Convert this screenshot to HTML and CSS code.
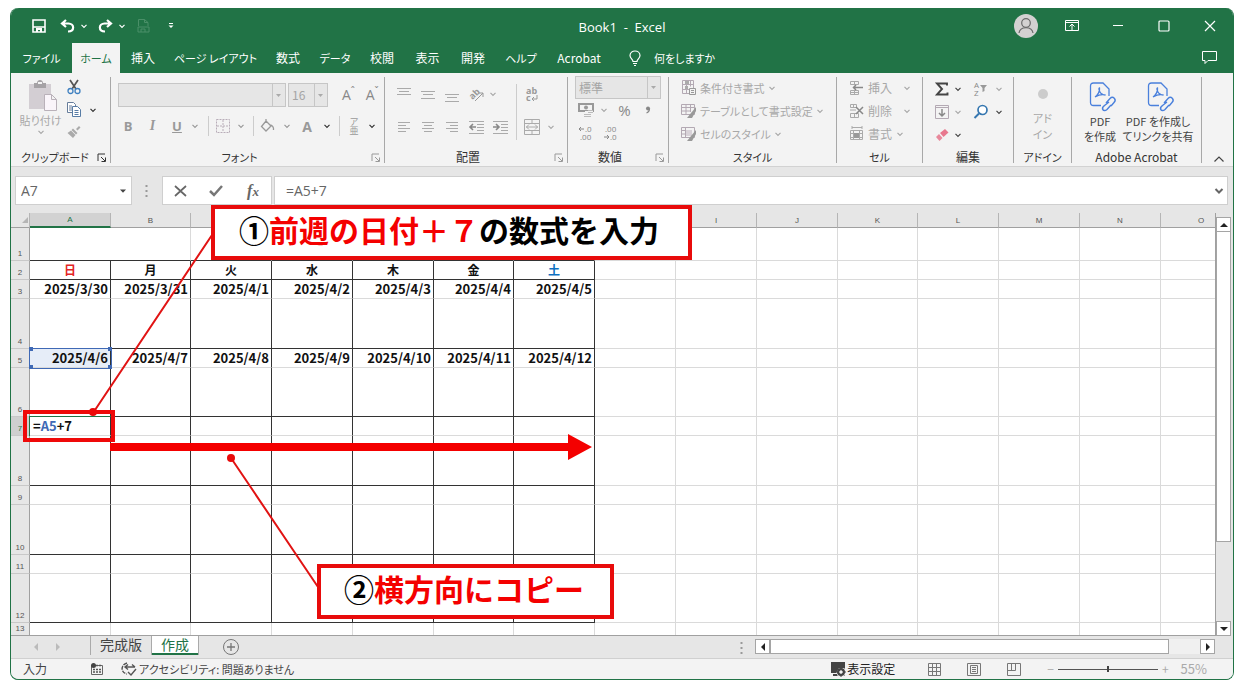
FILE: index.html
```html
<!DOCTYPE html>
<html lang="ja">
<head>
<meta charset="utf-8">
<meta name="viewport" content="width=device-width, initial-scale=1">
<title>Book1 - Excel</title>
<link rel="stylesheet" href="styles.css">
</head>
<body>
<svg class="defs" aria-hidden="true">
  <symbol id="chev" viewBox="0 0 8 8"><path d="M1.500 2.800 4 5.300 6.500 2.800" fill="none" stroke="currentColor" stroke-width="1.200"/></symbol>
  <symbol id="launch" viewBox="0 0 10 10"><path d="M1 8V1h7M4 4l4 4M8.500 4.500v4h-4" fill="none" stroke="currentColor"/></symbol>
  <symbol id="down" viewBox="0 0 8 8"><path d="M1 2.500h6L4 5.800z" fill="currentColor"/></symbol>
</svg>
<main class="stage">
<div class="window">
  <header class="titlebar">
    <div class="quick">
      <button aria-label="上書き保存"><svg width="14" height="14" viewBox="0 0 14 14"><path d="M1 1h12v12H1z M1 8h12" fill="none" stroke="#fff" stroke-width="1.600"/><path d="M4 9h6v4H8v-2H6v2H4z" fill="#fff"/></svg></button>
      <button class="undo" aria-label="元に戻す"><svg width="16" height="14" viewBox="0 0 16 14"><path d="M6 1 2 4.500 6 8M2.500 4.500h6c6 0 6.500 8-.5 8" fill="none" stroke="#fff" stroke-width="2.200"/></svg></button>
      <button aria-label="元に戻す一覧"><svg width="8" height="8"><use href="#chev"/></svg></button>
      <button aria-label="やり直し"><svg width="16" height="14" viewBox="0 0 16 14"><path d="M10 1l4 3.500L10 8M13.500 4.500h-6c-6 0-6.500 8 .5 8" fill="none" stroke="#fff" stroke-width="2.200"/></svg></button>
      <button aria-label="やり直し一覧"><svg width="8" height="8"><use href="#chev"/></svg></button>
      <button aria-label="PDF" disabled><svg width="13" height="15" viewBox="0 0 13 15"><path d="M1.500 8V1.500h6l3.500 3V8M7.500 1.500v3H11M1 9h11v5H1zM4 14v-3h4v3" fill="none" stroke="#4a8f68"/></svg></button>
      <button aria-label="クイック アクセスのカスタマイズ"><svg width="6" height="8" viewBox="0 0 6 8"><path d="M1 1.500h4" stroke="#fff"/><path d="M.5 3.500h5L3 6z" fill="#fff"/></svg></button>
    </div>
    <h1>Book1&nbsp; -&nbsp; Excel</h1>
    <div class="winctl">
      <button aria-label="アカウント"><svg width="24" height="24" viewBox="0 0 24 24"><circle cx="12" cy="12" r="12" fill="#d3d1d1"/><circle cx="12" cy="9" r="4.300" fill="none" stroke="#696969" stroke-width="1.200"/><path d="M5 19c1-7 13-7 14 0" fill="none" stroke="#696969" stroke-width="1.200"/></svg></button>
      <button aria-label="リボンの表示"><svg width="14" height="12" viewBox="0 0 14 12"><path d="M.5.5h13v10H.5zM.5 2.500h13M7 10V4M4.500 6.500 7 4l2.500 2.500" fill="none" stroke="#fff"/></svg></button>
      <button aria-label="最小化"><svg width="12" height="12"><path d="M1 5.500h10" stroke="#fff"/></svg></button>
      <button aria-label="最大化"><svg width="12" height="12"><rect x="1" y="1" width="10" height="10" rx="1" fill="none" stroke="#fff" stroke-width="1.200"/></svg></button>
      <button aria-label="閉じる"><svg width="12" height="12"><path d="M1 1l10 10M11 1 1 11" stroke="#fff" stroke-width="1.200"/></svg></button>
    </div>
  </header>
  <nav class="tabs">
    <button class="kana">ファイル</button><button class="on kana">ホーム</button><button>挿入</button><button class="kana">ページ レイアウト</button><button>数式</button><button class="kana">データ</button><button>校閲</button><button>表示</button><button>開発</button><button class="kana">ヘルプ</button><button>Acrobat</button>
    <button class="tell kana"><svg width="12" height="16" viewBox="0 0 12 16"><path d="M4 11.500C4 9 1 8.500 1 5.500c0-6 10-6 10 0 0 3-3 3.500-3 6zM4 13.500h4M5 15.500h2" fill="none" stroke="#fff" stroke-width="1.200"/></svg>何をしますか</button>
    <button class="comment" aria-label="コメント"><svg width="16" height="14" viewBox="0 0 16 14"><path d="M.5.5h14v9H6l-3 3v-3H.5z" fill="none" stroke="#fff"/></svg></button>
  </nav>

  <section class="ribbon">
    <div class="group clip">
      <div class="body">
        <button class="paste off"><svg class="board" width="30" height="32" viewBox="0 0 30 32"><path d="M1 4h22v25H1z" fill="#d3ced3"/><path d="M6 3h3c0-4 6-4 6 0h3v5H6z" fill="#a5a2a5"/><path d="M10 2h4v2h-4z" fill="#f3f3f3"/><path d="M16.500 14.500h7l5 5v11h-12zM23.500 14.500v5h5" fill="#faf5fa" stroke="#b9b1b9"/></svg><span>貼り付け</span><svg width="8" height="8"><use href="#chev"/></svg></button>
        <div class="stack">
          <button aria-label="切り取り"><svg width="14" height="16" viewBox="0 0 14 16"><path d="M3 1l6 9M11 1 5 10" stroke="#555" stroke-width="1.700"/><circle cx="3.500" cy="12" r="2.500" fill="none" stroke="#3f80c0" stroke-width="1.300"/><circle cx="10.500" cy="12" r="2.500" fill="none" stroke="#3f80c0" stroke-width="1.300"/></svg></button>
          <button aria-label="コピー"><svg width="14" height="16" viewBox="0 0 14 16"><path d="M.5.5h6l2 2v8h-8zM2 4h3M2 6h3M2 8h3" fill="#fff" stroke="#667d9b"/><path d="M5.500 4.500h5l3 3v7h-8zM7.500 8.500h4M7.500 10.500h4M7.500 12.500h4" fill="#fff" stroke="#587ca5"/></svg></button>
          <button aria-label="書式のコピー"><svg width="14" height="14" viewBox="0 0 14 14"><path d="M9 4l3-3 1.500 1.500-3 3zM6 3.500 10.500 8 9 9.500 4.500 5zM4 5.500 8.500 10 6 13 .5 8z" fill="#aaa"/></svg></button>
        </div>
        <button class="copychev" aria-label="コピー一覧"><svg width="8" height="8"><use href="#chev"/></svg></button>
      </div>
      <footer>クリップボード<svg width="10" height="10"><use href="#launch"/></svg></footer>
    </div>

    <div class="group font off launcher">
      <div class="body">
        <div class="row first">
          <select class="family" aria-label="フォント" disabled><option></option></select>
          <select class="size" aria-label="フォント サイズ" disabled><option>16</option></select>
          <button class="grow" aria-label="フォント サイズの拡大">A<sup>ˆ</sup></button>
          <button class="grow" aria-label="フォント サイズの縮小">A<sup>ˇ</sup></button>
        </div>
        <div class="row second">
          <button><b>B</b></button><button><i>I</i></button><button><u>U</u></button><button aria-label="下線"><svg width="8" height="8"><use href="#chev"/></svg></button><span class="sep"></span>
          <button aria-label="罫線"><svg width="14" height="14" viewBox="0 0 14 14"><path d="M.5.5h13v13H.5zM7 1v12M1 7h12" fill="none" stroke="#b8adb8" stroke-dasharray="2 1"/></svg></button><button aria-label="罫線一覧"><svg width="8" height="8"><use href="#chev"/></svg></button><span class="sep"></span>
          <button aria-label="塗りつぶし"><svg width="14" height="14" viewBox="0 0 14 14"><path d="M5 2l5 5-5 5-4.500-4.500zM5 2V0M9 6c2 0 4 2 3.500 5" fill="none" stroke="#999" stroke-width="1.300"/></svg></button><button aria-label="塗りつぶし一覧"><svg width="8" height="8"><use href="#chev"/></svg></button>
          <button class="fontcolor">A</button><button class="live" aria-label="フォントの色"><svg width="8" height="8"><use href="#chev"/></svg></button><span class="sep"></span>
          <button class="ruby"><span>ア</span><span>亜</span></button><button class="live" aria-label="ふりがな"><svg width="8" height="8"><use href="#chev"/></svg></button>
        </div>
      </div>
      <footer class="kana">フォント<svg width="10" height="10"><use href="#launch"/></svg></footer>
    </div>

    <div class="group align off launcher">
      <div class="body">
        <div class="aligns">
          <button aria-label="上揃え"><svg width="16" height="16"><path d="M1 2.500h14M3 5.500h10M1 8.500h14" stroke="#aaa"/></svg></button>
          <button aria-label="上下中央揃え"><svg width="16" height="16"><path d="M1 5.500h14M3 8.500h10M1 12.500h14" stroke="#aaa"/></svg></button>
          <button aria-label="下揃え"><svg width="16" height="16"><path d="M1 8.500h14M3 11.500h10M1 15.500h14" stroke="#aaa"/></svg></button>
          <button aria-label="方向"><svg width="18" height="18" viewBox="0 0 18 18"><text x="0" y="12" transform="rotate(-45 6 8)" class="tiny">ab</text><path d="M7 16l8-8M15 12V8h-4" fill="none" stroke="#999"/></svg></button>
          <button class="near" aria-label="方向一覧"><svg width="8" height="8"><use href="#chev"/></svg></button>
          <button aria-label="左揃え"><svg width="16" height="16"><path d="M2 3.500h12M2 6.500h8M2 9.500h12M2 12.500h8" stroke="#aaa"/></svg></button>
          <button aria-label="中央揃え"><svg width="16" height="16"><path d="M2 3.500h12M4 6.500h8M2 9.500h12M4 12.500h8" stroke="#aaa"/></svg></button>
          <button aria-label="右揃え"><svg width="16" height="16"><path d="M2 3.500h12M6 6.500h8M2 9.500h12M6 12.500h8" stroke="#aaa"/></svg></button>
          <button aria-label="インデント減"><svg width="16" height="16"><path d="M0 2.500h15M8 5.500h7M8 8.500h7M8 11.500h7M0 14.500h15" stroke="#aaa"/><path d="M7 8H1M4 5 1 8l3 3" fill="none" stroke="#888" stroke-width="1.600"/></svg></button>
          <button aria-label="インデント増"><svg width="16" height="16"><path d="M0 2.500h15M8 5.500h7M8 8.500h7M8 11.500h7M0 14.500h15" stroke="#aaa"/><path d="M0 8h6M3 5l3 3-3 3" fill="none" stroke="#888" stroke-width="1.600"/></svg></button>
        </div>
        <span class="sep"></span>
        <div class="merge">
          <button aria-label="折り返し"><svg width="16" height="18" viewBox="0 0 16 18"><text x="2" y="8" class="tiny">ab</text><text x="2" y="15" class="tiny">c</text><path d="M13 9v4H8M10 11l-2 2 2 2" fill="none" stroke="#999"/></svg></button><span></span>
          <button aria-label="セルを結合"><svg width="16" height="16" viewBox="0 0 16 16"><path d="M.5.5h15v15H.5zM.5 4.500h15M.5 11.500h15M8 .5v4M8 11.500v4M2 8h12M5 5.500 2.500 8 5 10.500M11 5.500 13.500 8 11 10.500" fill="none" stroke="#aaa"/></svg></button>
          <button aria-label="結合一覧"><svg width="8" height="8"><use href="#chev"/></svg></button>
        </div>
      </div>
      <footer>配置<svg width="10" height="10"><use href="#launch"/></svg></footer>
    </div>

    <div class="group number off launcher">
      <div class="body">
        <select aria-label="表示形式" disabled><option>標準</option></select>
        <div class="row">
          <button aria-label="通貨"><svg width="16" height="16" viewBox="0 0 16 16"><path d="M1 2h14v7H1z" fill="none" stroke="#999" stroke-width="2"/><circle cx="8" cy="5.500" r="2" fill="#999"/><path d="M7 9h8v6H7z" fill="#f3f3f3"/><path d="M10 8.500h5M10 10.500h5M6 12.500h7M6 14.500h7" stroke="#bbb"/></svg></button>
          <button aria-label="通貨一覧"><svg width="8" height="8"><use href="#chev"/></svg></button>
          <button class="pct">%</button><button class="comma" aria-label="桁区切り"><svg width="6" height="8" viewBox="0 0 6 8"><circle cx="3" cy="2.500" r="2" fill="#888"/><path d="M4.500 2.500Q4.500 6 1.500 7" fill="none" stroke="#888" stroke-width="1.200"/></svg></button>
        </div>
        <div class="row decimals">
          <button aria-label="小数点以下を増やす"><svg width="15" height="16" viewBox="0 0 15 16"><path d="M6 4H1M3 2 1 4l2 2" fill="none" stroke="#888"/><text x="7" y="7" class="micro">.0</text><text x="2" y="15" class="micro">.00</text></svg></button>
          <button aria-label="小数点以下を減らす"><svg width="15" height="16" viewBox="0 0 15 16"><text x="2" y="7" class="micro">.00</text><path d="M1 12h5M4 10l2 2-2 2" fill="none" stroke="#888"/><text x="7" y="15" class="micro">.0</text></svg></button>
        </div>
      </div>
      <footer>数値<svg width="10" height="10"><use href="#launch"/></svg></footer>
    </div>

    <div class="group styles off">
      <div class="body list">
        <button><svg width="16" height="16" viewBox="0 0 16 16"><path d="M1.500.5h11v13h-11zM1.500 4.500h11M1.500 9.500h11M5.500.5v13M9.500.5v6" fill="none" stroke="#b3a9b3"/><path d="M4 1h4v3H4zM4 6h3v3H4z" fill="#aaa"/><path d="M8.500 8.500h6v6h-6zM10 10.500h3M10 12.500h3" fill="#f3f3f3" stroke="#999"/></svg>条件付き書式<svg width="8" height="8"><use href="#chev"/></svg></button>
        <button><svg width="16" height="16" viewBox="0 0 16 16"><path d="M.5 1.500h13v10H.5zM.5 4.500h13M.5 8H10M5 1.500v10M9.500 1.500V9" fill="none" stroke="#b3a9b3"/><path d="M15 4 10 10l-4 5h5l4-7z" fill="#999"/></svg>テーブルとして書式設定<svg width="8" height="8"><use href="#chev"/></svg></button>
        <button><svg width="16" height="16" viewBox="0 0 16 16"><path d="M.5 1.500h13v10H.5zM.5 4.500h4M.5 8h4M4.500 1.500v10" fill="none" stroke="#b3a9b3"/><path d="M5 4h6v6H5z" fill="#d8d2d8"/><path d="M15 4 10 10l-4 5h5l4-7z" fill="#999"/></svg>セルのスタイル<svg width="8" height="8"><use href="#chev"/></svg></button>
      </div>
      <footer class="kana">スタイル</footer>
    </div>

    <div class="group cells off">
      <div class="body list">
        <button><svg width="16" height="16" viewBox="0 0 16 16"><path d="M1.500 1.500h8v3h-8zM1.500 10.500h8v4h-8zM5.500 1.500v3M5.500 10.500v4M1 12.500h8" fill="none" stroke="#aaa"/><path d="M14 7.500H5M7 5 4.500 7.500 7 10" fill="none" stroke="#888" stroke-width="1.500"/></svg><span>挿入</span><svg width="8" height="8"><use href="#chev"/></svg></button>
        <button><svg width="16" height="16" viewBox="0 0 16 16"><path d="M1.500 1.500h6v3h-6zM1.500 10.500h8v4h-8zM4.500 1.500v3M5.500 10.500v4M1 7h6" fill="none" stroke="#aaa"/><path d="M7 4l7 7M14 4l-7 7" stroke="#888" stroke-width="1.500"/></svg><span>削除</span><svg width="8" height="8"><use href="#chev"/></svg></button>
        <button class="tight"><svg width="16" height="16" viewBox="0 0 16 16"><path d="M1.500 4.500h12v9h-12zM4.500 4v10M10.500 4v10M1 7.500h13M1 11.500h13M3 1.500h10M3 0v3M13 0v3" fill="none" stroke="#aaa"/><path d="M5 7h5v5H5z" fill="#999"/></svg><span>書式</span><svg width="8" height="8"><use href="#chev"/></svg></button>
      </div>
      <footer class="kana">セル</footer>
    </div>

    <div class="group edit">
      <div class="body">
        <button aria-label="オート SUM"><svg width="14" height="14" viewBox="0 0 14 14"><path d="M12 3.500V1.500H2L7 7l-5 5.500h10.500v-2" fill="none" stroke="#444" stroke-width="1.900"/></svg></button><button aria-label="SUM一覧"><svg width="8" height="8"><use href="#chev"/></svg></button>
        <button class="off" aria-label="並べ替え"><svg width="16" height="16" viewBox="0 0 16 16"><text x="1" y="7" class="micro">A</text><text x="1" y="15" class="micro">Z</text><path d="M7 4h7l-2.500 3v3l-2 1V7z" fill="#999"/></svg></button><button class="off" aria-label="並べ替え一覧"><svg width="8" height="8"><use href="#chev"/></svg></button>
        <button class="off" aria-label="フィル"><svg width="14" height="14" viewBox="0 0 14 14"><path d="M.5.5h13v13H.5zM.5 2.500h13" fill="none" stroke="#b3a9b3"/><path d="M7 4v7M4 8l3 3 3-3" fill="none" stroke="#888" stroke-width="1.500"/></svg></button><button class="off" aria-label="フィル一覧"><svg width="8" height="8"><use href="#chev"/></svg></button>
        <button aria-label="検索"><svg width="16" height="16" viewBox="0 0 16 16"><circle cx="9.500" cy="6" r="4.500" fill="#fff" stroke="#3677b0" stroke-width="1.700"/><path d="M6 9.500 1.500 14" stroke="#3677b0" stroke-width="2"/></svg></button><button aria-label="検索一覧"><svg width="8" height="8"><use href="#chev"/></svg></button>
        <button aria-label="クリア"><svg width="14" height="14" viewBox="0 0 14 14"><path d="M5 5l5-4 3.500 3.500-5 4.500z" fill="#e8788e"/><path d="M4 6l3.500 4L4.500 13 1 9z" fill="#e8889b"/></svg></button><button aria-label="クリア一覧"><svg width="8" height="8"><use href="#chev"/></svg></button>
      </div>
      <footer>編集</footer>
    </div>

    <div class="group addin off">
      <div class="body"><button class="kana"><svg width="12" height="12"><circle cx="6" cy="6" r="5" fill="#ccc"/></svg><span>アド<br>イン</span></button></div>
      <footer class="kana">アドイン</footer>
    </div>

    <div class="group acrobat">
      <div class="body">
        <button><svg width="28" height="30" viewBox="0 0 28 30"><path d="M12 23.500H4.500q-3 0-3-3V4q0-3 3-3H14l6 6v7M6 15c3-2 5-6 4.500-9-1.500 0 0 7 6 7-4-1-7 0-10.500 2z" fill="none" stroke="#4a80dc" stroke-width="1.300"/><path d="M17 21l4-4.500c3-3 7 1 4 4L22 24M20 20l-4.500 3.500c-4 3-1 7 2.500 4l4-4.500" fill="none" stroke="#4a80dc" stroke-width="1.400"/></svg><span>PDF<br>を作成</span></button>
        <button><svg width="28" height="30" viewBox="0 0 28 30"><path d="M12 23.500H4.500q-3 0-3-3V4q0-3 3-3H14l6 6v7M6 15c3-2 5-6 4.500-9-1.500 0 0 7 6 7-4-1-7 0-10.500 2z" fill="none" stroke="#4a80dc" stroke-width="1.300"/><path d="M17 21l4-4.500c3-3 7 1 4 4L22 24M20 20l-4.500 3.500c-4 3-1 7 2.500 4l4-4.500" fill="none" stroke="#4a80dc" stroke-width="1.400"/></svg><span>PDF を作成し<br>てリンクを共有</span></button>
      </div>
      <footer>Adobe Acrobat</footer>
    </div>
    <button class="collapse" aria-label="リボンを折りたたむ"><svg width="12" height="8"><path d="M1.500 6.500 6 2l4.500 4.500" fill="none" stroke="#444" stroke-width="1.200"/></svg></button>
  </section>

  <section class="formula">
    <div class="namebox"><input aria-label="名前ボックス" value="A7"><svg width="8" height="8"><use href="#down"/></svg></div>
    <svg class="grip" width="3" height="13"><path d="M1.500 1v12" stroke="#999" stroke-width="2" stroke-dasharray="2 3"/></svg>
    <div class="fx">
      <button aria-label="キャンセル"><svg width="13" height="12"><path d="M1 1l11 10M12 1 1 11" stroke="#666" stroke-width="1.700"/></svg></button>
      <button aria-label="入力"><svg width="14" height="12"><path d="M1 6l4 4 8-9" fill="none" stroke="#777" stroke-width="2.500"/></svg></button>
      <button class="fn" aria-label="関数の挿入"><i>f<small>x</small></i></button>
    </div>
    <div class="entry"><input aria-label="数式バー" value="=A5+7"><svg width="10" height="8" viewBox="0 0 10 8"><path d="M1.500 2 5 5.500 8.500 2" fill="none" stroke="#666" stroke-width="2"/></svg></div>
  </section>

  <section class="sheet">
    <div class="gridwrap">
    <table class="grid">
      <colgroup><col class="rh"><col><col class="s"><col><col><col><col class="s"><col><col><col><col><col class="s"><col><col><col><col class="last"></colgroup>
      <thead><tr><th class="corner"><svg width="8" height="8"><path d="M7 1v6H1z" fill="#b5b5b5"/></svg></th><th class="sel">A</th><th>B</th><th>C</th><th>D</th><th>E</th><th>F</th><th>G</th><th>H</th><th>I</th><th>J</th><th>K</th><th>L</th><th>M</th><th>N</th><th class="o">O</th></tr></thead>
      <tbody>
        <tr class="title"><th>1</th><td colspan="2"><td><td><td><td><td><td><td><td><td><td><td><td><td></tr>
        <tr class="cal dow line"><th>2</th><td class="sun">日</td><td>月</td><td>火</td><td>水</td><td>木</td><td>金</td><td class="sat">土</td><td><td><td><td><td><td><td><td></tr>
        <tr class="cal date"><th>3</th><td>2025/3/30</td><td>2025/3/31</td><td>2025/4/1</td><td>2025/4/2</td><td>2025/4/3</td><td>2025/4/4</td><td>2025/4/5</td><td><td><td><td><td><td><td><td></tr>
        <tr class="cal memo line"><th>4</th><td><td><td><td><td><td><td><td><td><td><td><td><td><td><td></tr>
        <tr class="cal date"><th>5</th><td class="ref">2025/4/6<i></i><i></i><i></i><i></i></td><td>2025/4/7</td><td>2025/4/8</td><td>2025/4/9</td><td>2025/4/10</td><td>2025/4/11</td><td>2025/4/12</td><td><td><td><td><td><td><td><td></tr>
        <tr class="cal memo short line"><th>6</th><td><td><td><td><td><td><td><td><td><td><td><td><td><td><td></tr>
        <tr class="cal date"><th class="rsel">7</th><td class="active">=<em>A5</em>+7</td><td><td><td><td><td><td><td><td><td><td><td><td><td><td></tr>
        <tr class="cal memo line"><th>8</th><td><td><td><td><td><td><td><td><td><td><td><td><td><td><td></tr>
        <tr class="cal date"><th>9</th><td><td><td><td><td><td><td><td><td><td><td><td><td><td><td></tr>
        <tr class="cal memo line"><th>10</th><td><td><td><td><td><td><td><td><td><td><td><td><td><td><td></tr>
        <tr class="cal date"><th>11</th><td><td><td><td><td><td><td><td><td><td><td><td><td><td><td></tr>
        <tr class="cal memo short line"><th>12</th><td><td><td><td><td><td><td><td><td><td><td><td><td><td><td></tr>
        <tr class="end"><th>13</th><td><td><td><td><td><td><td><td><td><td><td><td><td><td><td></tr>
      </tbody>
    </table>
    </div>
    <div class="vscroll"><button aria-label="上へ"><svg width="10" height="8"><path d="M1 6h8L5 2z" fill="#222"/></svg></button><span class="thumb"></span><button aria-label="下へ"><svg width="10" height="8"><path d="M1 2h8L5 6z" fill="#222"/></svg></button></div>
  </section>

  <nav class="sheets">
    <button class="arrow" aria-label="前のシート"><svg width="8" height="8"><path d="M6 0v8L2 4z" fill="#bbb"/></svg></button>
    <button class="arrow" aria-label="次のシート"><svg width="8" height="8"><path d="M2 0v8l4-4z" fill="#bbb"/></svg></button>
    <button class="tab first">完成版</button><button class="tab cur">作成</button>
    <button class="add" aria-label="新しいシート"><svg width="16" height="16"><circle cx="8" cy="8" r="7.500" fill="none" stroke="#777"/><path d="M4 8h8M8 4v8" stroke="#777" stroke-width="1.300"/></svg></button>
    <svg class="dots" width="3" height="12"><path d="M1.500 0v12" stroke="#999" stroke-width="2" stroke-dasharray="2 3"/></svg>
    <div class="hscroll"><button aria-label="左へ"><svg width="8" height="10"><path d="M6 1v8L2 5z" fill="#222"/></svg></button><span class="thumb"></span><button aria-label="右へ"><svg width="8" height="10"><path d="M2 1v8l4-4z" fill="#222"/></svg></button></div>
  </nav>
  <footer class="status">
    <span class="mode">入力</span>
    <svg width="12" height="12" viewBox="0 0 12 12"><path d="M.5 2.500h11v9H.5z" fill="none" stroke="#666"/><circle cx="2.500" cy="2.500" r="2.500" fill="#444"/><path d="M5 2.500h6M2 6.500h8M2 9h8" stroke="#555" stroke-width="1.500" stroke-dasharray="2 1"/></svg>
    <button class="acc kana"><svg width="16" height="14" viewBox="0 0 16 14"><path d="M6 1C-1 3 0 11 6 12" fill="none" stroke="#555" stroke-width="1.400" stroke-dasharray="4 1"/><path d="M4 5h10M7 2.500 4 5l3 2.500M11 2.500 14 5M7 10l3 3 5-6" fill="none" stroke="#555" stroke-width="1.400"/></svg>アクセシビリティ: 問題ありません</button>
    <button class="disp"><svg width="17" height="15" viewBox="0 0 17 15"><path d="M1 0h14v6H9l-3 5H1z" fill="#444"/><path d="M3 12h4v2H3z" fill="#444"/><circle cx="11" cy="10" r="3" fill="none" stroke="#444" stroke-width="2"/><path d="M11 5v10M6 10h10M7.500 6.500l7 7M14.500 6.500l-7 7" stroke="#444"/><circle cx="11" cy="10" r="1.500" fill="#f3f3f3"/></svg>表示設定</button>
    <button aria-label="標準"><svg width="13" height="13"><path d="M.5.5h12v12H.5zM4.500 0v13M8.500 0v13M0 4.500h13M0 8.500h13" fill="none" stroke="#777"/></svg></button>
    <button aria-label="ページ レイアウト"><svg width="14" height="13"><path d="M.5.5h13v12H.5zM3.500 2.500h7v8h-7zM5 4.500h4M5 6.500h4M5 8.500h4" fill="none" stroke="#777"/></svg></button>
    <button aria-label="改ページ"><svg width="14" height="13"><path d="M.5.5h13v12H.5zM.5 7.500h8M4.500 0v7.500M8.500 0v7.500" fill="none" stroke="#777"/></svg></button>
    <label class="zoom"><span>−</span><input type="range" min="0" max="100" value="50" aria-label="ズーム"><span>+</span></label>
    <span class="percent">55%</span>
  </footer>
</div>

<svg class="marks" aria-hidden="true">
  <path d="M93 413 212 235M231 458 318 587" stroke="#e11313" stroke-width="2"/>
  <circle cx="93" cy="412" r="4" fill="#e80b0b"/><circle cx="231" cy="458" r="4" fill="#e80b0b"/>
  <path d="M110 443h458v-9l24 13-24 13v-9H110z" fill="#f40000"/>
  <rect x="25" y="412" width="88" height="28" fill="none" stroke="#ef0909" stroke-width="4"/>
</svg>
<p class="callout one">①<em>前週の日付＋７</em>の数式を入力</p>
<p class="callout two">②<em>横方向にコピー</em></p>
</main>
</body>
</html>
```
FILE: styles.css
```css
* { box-sizing: border-box; }
body {
  margin: 0;
  background: #fff;
  color: #444;
  font-family: "Noto Sans CJK JP", "Noto Sans", sans-serif;
  font-size: 12px;
  line-height: 16px;
}
button, input, select { font: inherit; color: inherit; }
button {
  display: flex; align-items: center; justify-content: center;
  margin: 0; padding: 0; border: 0; background: none;
  white-space: nowrap;
  font-feature-settings: "palt";
}
svg { display: block; flex: none; overflow: visible; }
.kana { font-size: 11px; }
.defs { position: absolute; width: 0; height: 0; }
.stage { position: relative; padding: 8px 6px 8px 11px; }
.window {
  display: flex; flex-direction: column;
  border: solid #217346; border-width: 0 1px 1px 0;
  border-radius: 8px;
  overflow: hidden;
  background: #e6e6e6;
  box-shadow: -1px 0 0 #217346;
}

/* title bar */
.titlebar {
  display: grid; grid-template-columns: 1fr auto 1fr; align-items: center;
  height: 35px;
  background: #217346; color: #fff;
}
.titlebar h1 { margin: 0; padding-top: 2px; font-size: 13px; font-weight: 400; font-family: "Open Sans", sans-serif; }
.quick { display: grid; grid-template-columns: 20px 27px 16px 26px 8px 34px 22px; padding-left: 18px; }
.undo { justify-content: flex-end; }
.winctl { display: grid; grid-template-columns: 46px 46px 46px 46px 46px; justify-content: end; height: 32px; }

/* ribbon tabs */
.tabs {
  display: grid;
  grid-template-columns: 61px 48px 46px 99px 46px 48px 46px 45px 46px 50px 66px 112px 1fr;
  height: 30px;
  background: #217346; color: #fff;
}
.tabs .on { background: #f3f3f3; color: #217346; }
.tell { gap: 13px; justify-content: flex-start; padding-left: 17px; }
.comment { justify-content: flex-end; padding-right: 15px; }

/* ribbon */
.ribbon {
  display: flex;
  height: 94px; padding: 4px 0 3px;
  background: #f3f3f3;
  border-bottom: 1px solid #d2d2d2;
}
.group {
  display: flex; flex-direction: column; flex: none;
  border-right: 1px solid #a8a8a8;
}
.group .body { flex: 1; }
.group footer {
  display: flex; justify-content: center; align-items: center;
  position: relative;
  height: 16px; padding-top: 4px;
  color: #333;
  font-feature-settings: "palt";
}
.launcher footer { padding-right: 16px; }
.group footer svg { position: absolute; right: 3px; bottom: 0; color: #999; }
.clip footer svg { color: #333; }
.off { color: #a8a8a8; }
.live { color: #333; }
.row { display: flex; align-items: center; }
.sep { flex: none; width: 1px; height: 20px; background: #ccc; justify-self: center; }
.ribbon select {
  appearance: none;
  border: 1px solid #c6c6c6; border-radius: 0;
  background:
    url("data:image/svg+xml,%3Csvg xmlns='http://www.w3.org/2000/svg' width='5' height='3'%3E%3Cpath d='M0 0h5L2.5 3z' fill='%23aaa'/%3E%3C/svg%3E") right 4px center no-repeat,
    linear-gradient(#c6c6c6, #c6c6c6) right 12px top / 1px 100% no-repeat #e6e6e6;
  color: #a5a5a5; opacity: 1;
  padding: 0 3px;
}

.clip { width: 100px; }
.clip .body { display: flex; padding-left: 9px; }
.group.clip footer { justify-content: flex-start; padding-left: 10px; font-size: 11px; }
.paste { flex-direction: column; justify-content: flex-start; width: 41px; padding-top: 3px; font-size: 11px; }
.board { margin-left: 5px; }
.stack { display: flex; flex-direction: column; gap: 7px; padding: 2px 0 0 6px; }
.copychev { align-self: flex-start; height: 20px; margin: 23px 0 0 8px; color: #333; }

.font { width: 274px; }
.font .body { padding: 6px 0 0 7px; }
.family { width: 170px; height: 24px; }
.size { width: 40px; height: 24px; margin-left: 2px; }
.grow { width: 24px; font-size: 14px; font-family: "Open Sans", sans-serif; color: #888; }
.grow sup { font-size: 10px; line-height: 8px; align-self: flex-start; }
.size + .grow { margin-left: 9px; }
.second {
  display: grid;
  grid-template-columns: 24px 25px 24px 12px 14px 16px 20px 5px 24px 14px 26px 14px 10px 20px 16px;
  padding-top: 9px; margin-left: -2px;
  font-size: 13px; color: #999;
}
.second b, .second u { font-weight: 700; font-family: "Open Sans", sans-serif; }
.fontcolor { font: 700 14px "Open Sans", sans-serif; }
.second i { font-family: "Liberation Serif", serif; font-weight: 700; font-size: 14px; }
.ruby { flex-direction: column; font-size: 9px; line-height: 9px; }

.align { width: 183px; }
.align .body { display: flex; padding: 5px 0 0 7px; }
.aligns { display: grid; grid-template-columns: 24px 24px 24px 25px 20px; grid-template-rows: 24px 34px; align-items: center; }
.aligns button:nth-child(n+6) { padding-top: 8px; }
.aligns button:nth-child(10) { width: 24px; }
.near { justify-content: flex-start; }
.align .sep { height: 56px; margin: 2px 0 0 7px; }
.merge { display: grid; grid-template-columns: 30px 8px; grid-template-rows: 26px 38px; }
.tiny { font: 700 9px "Open Sans", sans-serif; fill: #999; }
.micro { font: 8px "Open Sans", sans-serif; fill: #888; }

.number { width: 101px; }
.number .body { padding: 0 7px; }
.number select { display: block; width: 86px; height: 23px; margin-top: -1px; }
.number .row { padding: 2px 0 0 3px; }
.number .row button:nth-child(2) { width: 20px; }
.number .row .pct { width: 22px; font: 15px/18px "Open Sans", sans-serif; color: #888; }
.comma { width: 26px; }
.number .decimals { gap: 10px; padding-top: 6px; }
.number .decimals button:nth-child(2) { width: 15px; }

.list { display: flex; flex-direction: column; gap: 7px; padding: 3px 0 0 12px; }
.list button { justify-content: flex-start; gap: 3px; height: 16px; }
.styles { width: 168px; }
.styles .list { font-size: 11px; }
.cells { width: 86px; }
.cells span { width: 32px; text-align: left; }
.cells .tight span { width: 25px; }

.edit { width: 91px; }
.edit .body {
  display: grid; grid-template-columns: 18px 14px 32px 4px; grid-auto-rows: 23px;
  align-content: start; padding-left: 10px;
}
.addin { width: 58px; }
.addin button { flex-direction: column; gap: 10px; width: 100%; padding-top: 11px; }
.acrobat { width: 130px; }
.acrobat .body { display: grid; grid-template-columns: 44px 72px; padding: 5px 0 0 6px; }
.acrobat button { flex-direction: column; justify-content: flex-start; font-size: 11px; }
.acrobat button svg { margin-left: 5px; }
.acrobat button span { line-height: 15px; padding-top: 2px; }
.collapse { margin-left: auto; align-self: flex-end; width: 28px; height: 8px; }

/* formula bar */
.formula { display: flex; align-items: center; padding: 9px 5px 8px 4px; }
.formula input { border: 0; background: none; padding: 0 5px; width: 100%; min-width: 0; font-size: 14px; font-family: "Open Sans", sans-serif; color: #666; outline: 0; }
.namebox, .fx, .entry { display: flex; align-items: center; height: 29px; background: #fff; border: 1px solid #cfcfcf; }
.namebox { width: 117px; padding-right: 4px; }
.grip { margin: 0 14px 0 13px; }
.fx { display: grid; grid-template-columns: 34px 38px 36px; width: 110px; margin-right: 2px; }
.fn { font: 700 16px "Liberation Serif", serif; color: #666; }
.fn small { font-size: 13px; }
.entry { flex: 1; padding: 0 3px 0 6px; }

/* sheet */
.sheet { display: flex; }
.gridwrap { flex: 1; min-width: 0; overflow: hidden; border: solid #a0a0a0; border-width: 0 1px 1px 0; }
.grid { width: 100%; table-layout: fixed; border-collapse: separate; border-spacing: 0; }
col { width: 81px; }
col.rh { width: 19px; }
col.s { width: 80px; }
col.last { width: auto; }
.grid th { padding: 0; background: #e6e6e6; color: #555; font: 8px/9px "Liberation Sans", sans-serif; }
.grid thead th { height: 15px; border-right: 1px solid #b5b5b5; border-bottom: 1px solid #a0a0a0; vertical-align: middle; }
.grid thead .sel { background: #d2d2d2; color: #217346; border-bottom: 2px solid #217346; }
.grid thead .o { padding-left: 26px; border-right: 0; }
.corner svg { margin-left: auto; }
.grid tbody th { padding-bottom: 2px; border-right: 1px solid #a0a0a0; border-bottom: 1px solid #c8c8c8; vertical-align: bottom; }
.grid tbody .rsel { background: #cfcfcf; color: #217346; }
.grid td { padding: 0; border-right: 1px solid #dadada; border-bottom: 1px solid #dadada; background: #fff; color: #111; white-space: nowrap; }
.grid td:last-child { border-right: 0; }
.title { height: 33px; }
.dow, .date { height: 19px; }
.memo { height: 50px; }
.short { height: 49px; }
.end { height: 12px; }
.grid .end td, .grid .end th { border-bottom: 0; }
.title td:nth-child(-n+7), .line td:nth-child(-n+8) { border-bottom-color: #333; }
.cal td:nth-child(-n+8) { border-right-color: #333; }
.dow td { text-align: center; font-weight: 700; line-height: 16px; }
.grid .sun { color: #e32424; }
.grid .sat { color: #0f70c0; }
.date td { padding-right: 2px; text-align: right; font-size: 13px; font-weight: 700; line-height: 16px; }
.grid .ref { position: relative; background: #e6edf8; box-shadow: 0 0 0 1px #3f69b5; }
.ref i { position: absolute; width: 4px; height: 4px; background: #3f69b5; }
.ref i:nth-child(1) { left: -1px; top: -2px; }
.ref i:nth-child(2) { right: -2px; top: -2px; }
.ref i:nth-child(3) { left: -1px; bottom: -2px; }
.ref i:nth-child(4) { right: -2px; bottom: -2px; }
.grid .active { padding-left: 3px; text-align: left; font-size: 13px; box-shadow: 0 0 0 1px #217346; }
.active em { font-style: normal; color: #3f69b5; }

.vscroll { display: flex; flex-direction: column; width: 17px; padding: 4px 2px 0 0; background: #e6e6e6; }
.vscroll button { height: 15px; }
.vscroll button, .hscroll button, .thumb { background: #fff; border: 1px solid #a5a5a5; }
.vscroll .thumb { height: 310px; margin-bottom: auto; border-top: 0; }

/* sheet tabs */
.sheets { display: flex; height: 23px; border-bottom: 1px solid #d0d0d0; }
.arrow { width: 22px; }
.arrow:first-child { margin-left: 14px; }
.tab { font-size: 14px; padding: 0 9px 4px; height: 19px; }
.tab.first { margin-left: 21px; border-left: 1px solid #aaa; }
.tab.cur { background: #fff; color: #217346; border: solid #aaa; border-width: 0 1px; box-shadow: inset 0 -2px 0 #217346; }
.add { margin-left: 24px; }
.dots { margin: 6px 12px 0 auto; }
.hscroll { display: flex; width: 460px; margin: 3px 18px 4px 0; background: #f0f0f0; }
.hscroll button { width: 15px; }
.hscroll .thumb { flex: 1; margin-right: 31px; }

/* status bar */
.status { display: flex; align-items: center; height: 20px; padding: 0 26px 0 12px; background: #f3f3f3; }
.mode { margin-right: 44px; }
.acc { margin-left: 18px; gap: 2px; }
.disp { margin: 0 33px 0 auto; color: #222; }
.status button + button + button { margin-right: 26px; }
.zoom { display: flex; align-items: center; gap: 4px; color: #aaa; }
.zoom input {
  appearance: none; width: 100px; height: 12px; margin: 0;
  background: linear-gradient(#555, #555) center / 100% 1px no-repeat;
}
.zoom input::-webkit-slider-thumb { appearance: none; width: 2px; height: 6px; background: #444; }
.percent { margin-left: 12px; font-size: 13px; color: #aaa; }

/* annotations */
.marks { position: absolute; left: 0; top: 0; width: 100%; height: 100%; }
.callout {
  position: absolute; margin: 0;
  border: 4px solid #e80b0b;
  background: #fff; color: #000;
  font-size: 30px; line-height: 40px; font-weight: 700;
  white-space: nowrap;
}
.callout em { font-style: normal; color: #f40000; }
.one { left: 211px; top: 205px; padding: 0 29px 7px 24px; }
.two { left: 317px; top: 564px; padding: 0 26px 7px 23px; }
```
